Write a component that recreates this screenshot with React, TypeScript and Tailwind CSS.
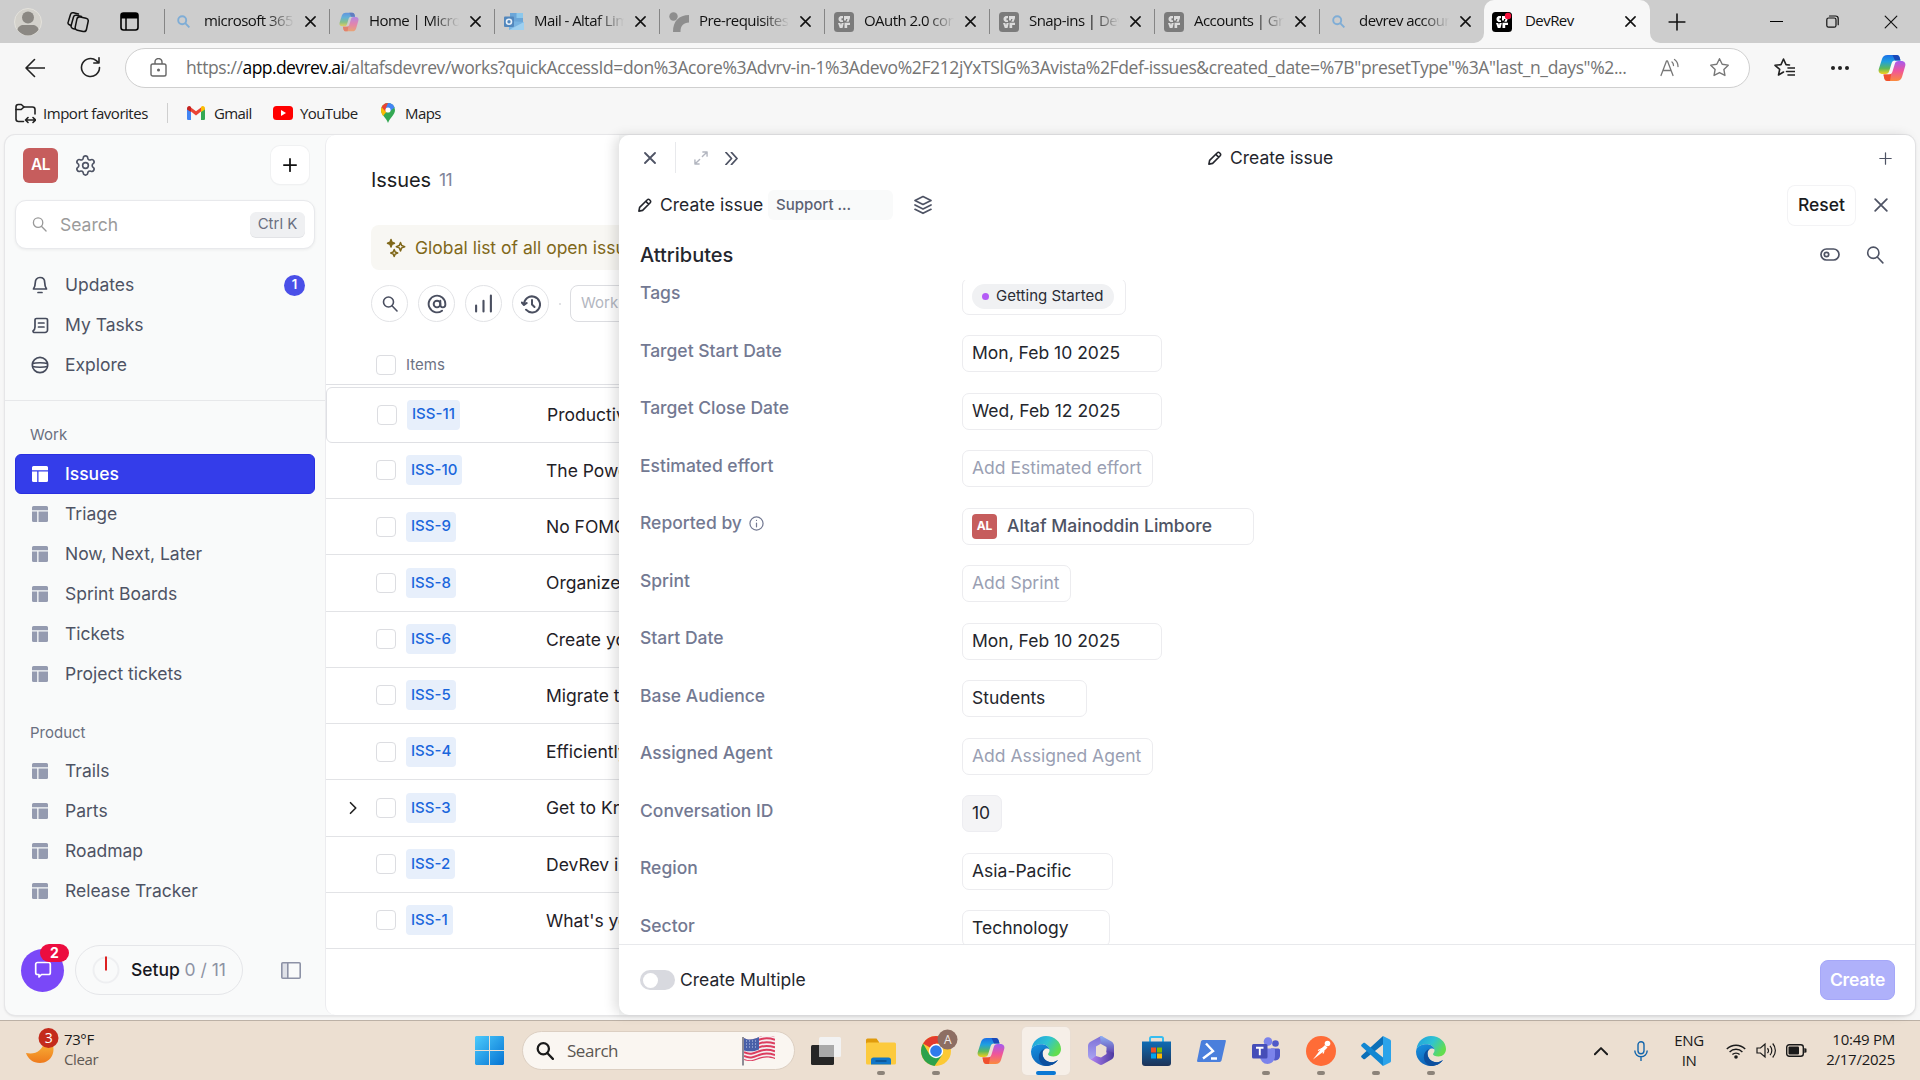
import React, { type ReactNode } from "react";
import { Settings } from "lucide-react";

/* ---------- icons ---------- */

type IconProps = { className?: string };

function Stroke({
  className = "size-5",
  box = 24,
  w = 2,
  children,
}: {
  className?: string;
  box?: number;
  w?: number;
  children: ReactNode;
}) {
  return (
    <svg
      className={className + " shrink-0"}
      viewBox={`0 0 ${box} ${box}`}
      fill="none"
      stroke="currentColor"
      strokeWidth={w}
      strokeLinecap="round"
      strokeLinejoin="round"
    >
      {children}
    </svg>
  );
}

const CloseIcon = ({ className = "size-[10px]", w = 1.7 }: IconProps & { w?: number }) => (
  <Stroke className={className} box={12} w={w}>
    <path d="M1 1l10 10M11 1L1 11" />
  </Stroke>
);

const PlusIcon = ({ className, w = 1.5 }: IconProps & { w?: number }) => (
  <Stroke className={className} box={16} w={w}>
    <path d="M8 1v14M1 8h14" />
  </Stroke>
);

const SearchIcon = ({ className, w = 1.5 }: IconProps & { w?: number }) => (
  <Stroke className={className} box={16} w={w}>
    <circle cx="6.5" cy="6" r="5" />
    <path d="M10 9.8L15 15" />
  </Stroke>
);

const PencilIcon = () => (
  <Stroke className="size-[15px]" box={16} w={1.7}>
    <path d="M2 14l.8-4L11 1.9a1.6 1.6 0 0 1 2.3 0l.8.8a1.6 1.6 0 0 1 0 2.3L6 13.2 2 14zM9.4 3.6l3 3" />
  </Stroke>
);

const BoardIcon = ({ className = "text-[#959bb0]" }: IconProps) => (
  <svg className={"size-4 shrink-0 " + className} viewBox="0 0 16 16" fill="currentColor">
    <path d="M1.500 0h13A1.500 1.500 0 0 1 16 1.500v2.800H0V1.500A1.500 1.500 0 0 1 1.500 0z" />
    <path d="M0 5.500h5.200V16H1.500A1.500 1.500 0 0 1 0 14.500z" />
    <path d="M6.500 5.500H16v9a1.500 1.500 0 0 1-1.500 1.500h-8z" />
  </svg>
);

const CopilotIcon = ({ className = "size-7", faded = false }: IconProps & { faded?: boolean }) => (
  <svg className={className + " shrink-0" + (faded ? " opacity-60" : "")} viewBox="0 0 28 28">
    <defs>
      <linearGradient id="cpA" x1="0" y1="0" x2="0" y2="1">
        <stop offset="0" stopColor="#1b6fe8" />
        <stop offset=".35" stopColor="#1fa0e0" />
        <stop offset=".7" stopColor="#5cb85c" />
        <stop offset="1" stopColor="#f5cf1b" />
      </linearGradient>
      <linearGradient id="cpB" x1="0" y1="0" x2="0" y2="1">
        <stop offset="0" stopColor="#a45bf0" />
        <stop offset=".5" stopColor="#f0559a" />
        <stop offset="1" stopColor="#fb8b3c" />
      </linearGradient>
    </defs>
    <path d="M12 1h6.500c2 0 2.800 1.300 3.300 3l.7 2.500H17c-2 0-2.900 1-3.500 3l-2.200 7.300C10.700 19 9.600 20 7.500 20H4.800C1.500 20 0 17.800.8 15L4 5C4.900 2.400 6.500 1 9.500 1z" fill="url(#cpA)" />
    <path d="M14.500 1h4c2 0 2.800 1.300 3.300 3l.7 2.500H17z" fill="#1a49b8" />
    <path d="M16 27H9.500c-2 0-2.800-1.300-3.300-3l-.7-3.500H11c2 0 2.900-1 3.500-3l2.200-7.300C17.300 8 18.400 7 20.500 7h2.700c3.300 0 4.800 2.200 4 5L24 23c-.9 2.600-2.500 4-5.500 4z" fill="url(#cpB)" />
    <path d="M9.500 27c-2 0-2.800-1.300-3.300-3l-.7-3.500H11c1 0 1.700-.2 2.200-.7L12 27z" fill="#f0502e" />
  </svg>
);

const DevRevIcon = ({ active = false }: { active?: boolean }) => (
  <svg className="size-5 shrink-0" viewBox="0 0 20 20">
    <rect width="20" height="20" rx="3.500" fill={active ? "#000" : "#7b7b7b"} />
    <g fill={active ? "#fff" : "#dcdcdc"}>
      <path d="M9 4H6.500a3.200 3.200 0 0 0 0 6H9V8.200H7.500V6.200H9z" />
      <path d="M10 4h6v2l-1.300 3.800h-2.400L13.600 7H12v1.500h-2z" />
      <path d="M4 11h2.300l.7 2 .6-2h2.200L8.500 16H5.800z" />
      <path d="M10.500 10.800H16V13h-2.800v3h-2.700z" />
    </g>
    {active && <circle cx="16" cy="4" r="3.200" fill="#f5113c" />}
  </svg>
);

const TabSearch = () => (
  <svg className="size-[13px] shrink-0" viewBox="0 0 13 13" fill="none" stroke="#7fadd6" strokeWidth="1.900">
    <circle cx="5.200" cy="5.200" r="4" />
    <path d="M8.200 8.200l4.200 4.200" />
  </svg>
);

const OutlookIcon = () => (
  <svg className="size-5 shrink-0" viewBox="0 0 20 20">
    <path d="M6 1h13v9H6z" fill="#6ba6d8" />
    <path d="M12.500 1H19v5h-6.500z" fill="#8cc8ec" />
    <path d="M5 9l15 1v8H5z" fill="#78b4e2" />
    <path d="M20 10l-15 8h15z" fill="#9fd0f0" />
    <rect y="4.500" width="10" height="10.500" rx="1" fill="#5287bd" />
    <circle cx="5" cy="9.800" r="2.500" fill="none" stroke="#e9f1f8" strokeWidth="1.600" />
  </svg>
);

const SproutIcon = () => (
  <svg className="size-5 shrink-0" viewBox="0 0 20 20" fill="#8e8e8e">
    <circle cx="4.500" cy="4.500" r="4.200" />
    <path d="M20 3v7.500c-5.500.3-8.500 3-8.500 9.500H4C4 9 10 3.300 20 3z" />
  </svg>
);

const EdgeIcon = () => (
  <svg className="size-[30px] shrink-0" viewBox="0 0 30 30">
    <defs>
      <linearGradient id="edG" x1="0" y1="0" x2="1" y2=".5">
        <stop offset="0" stopColor="#1f9be0" />
        <stop offset=".55" stopColor="#2fc3d2" />
        <stop offset="1" stopColor="#62dd4e" />
      </linearGradient>
      <linearGradient id="edB" x1="0" y1="0" x2=".6" y2="1">
        <stop offset="0" stopColor="#1793e2" />
        <stop offset="1" stopColor="#0d5cb0" />
      </linearGradient>
    </defs>
    <path d="M.5 13C1.500 5.500 7.500 0 15 0c8.500 0 15 6 15 13 0 4.500-3.300 7.500-7.500 7.500-3.500 0-5.500-1.200-5.500-2.300 0-1 1.500-1.600 1.500-3.700C18.500 11 15 8.300 10.500 8.300 5.500 8.300 2 10.500.5 13z" fill="url(#edG)" />
    <path d="M.5 13C2 10.500 5.500 8.300 10.500 8.300c4 0 7.200 2.100 7.900 5.200C17 11.800 11.500 12 11.500 17.500c0 5.500 5 9.300 9.800 8.700 2-.2 3.800-1 5.700-2.200C24.400 27.700 20 30 15 30 6.700 30 0 23.500 0 15.500z" fill="url(#edB)" />
    <path d="M11.500 17.500c0 5.500 5 9.300 9.800 8.700 2-.2 3.800-1 5.700-2.200C24.400 27.700 20 30 15 30 10.500 29 7 24.500 8 19.500c.4-3 3-6.500 6.500-6.700-2 .9-3 2.600-3 4.700z" fill="#0c4f9e" />
  </svg>
);

const FavFolder = () => (
  <svg className="size-[21px] shrink-0" viewBox="0 0 21 21" fill="none" stroke="#222" strokeWidth="1.600" strokeLinecap="round" strokeLinejoin="round">
    <path d="M8.500 18.500H3.500A2.500 2.500 0 0 1 1 16V3.800A2.300 2.300 0 0 1 3.300 1.500h3L9 4h8.500A2.500 2.500 0 0 1 20 6.500V11" />
    <path d="M1 6.500h5.200L9 4M11 17h9M13 14.500L10.500 17l2.500 2.500M18 14.500l2.500 2.500-2.500 2.500" />
  </svg>
);

const GmailIcon = () => (
  <svg className="h-[14px] w-[18px] shrink-0" viewBox="0 0 18 14">
    <path d="M0 2.500V12.700C0 13.400.6 14 1.300 14H4V5.500z" fill="#4285f4" />
    <path d="M18 2.500V12.700c0 .7-.6 1.300-1.300 1.300H14V5.500z" fill="#34a853" />
    <path d="M4 5.500v-4L9 5.200l5-3.700v4L9 9.500z" fill="#ea4335" />
    <path d="M0 2.500C0 .3 2.400-.7 4 .9v5.100L0 3.500z" fill="#c5221f" />
    <path d="M18 2.500C18 .3 15.600-.7 14 .9v5.100l4-2.500z" fill="#fbbc04" />
  </svg>
);

const MapsIcon = () => (
  <svg className="h-[20px] w-[14px] shrink-0" viewBox="0 0 14 20">
    <path d="M7 0a7 7 0 0 1 7 7c0 5-5 7.500-7 13C5 14.500 0 12 0 7a7 7 0 0 1 7-7z" fill="#34a853" />
    <path d="M0 7a7 7 0 0 1 2-5l5 5-5 6C.7 11 0 9 0 7z" fill="#fbbc04" />
    <path d="M1.700 2.400A7 7 0 0 1 7 0l.5 4L4.500 8.500.6 4.300z" fill="#ea4335" />
    <path d="M7 0c3 0 5.700 1.900 6.600 4.500L8 9 4.800 5z" fill="#4285f4" />
    <circle cx="7" cy="7" r="2.600" fill="#fff" />
  </svg>
);

/* ---------- browser chrome ---------- */

const TABS: { title: string; icon: ReactNode }[] = [
  { title: "microsoft 365", icon: <TabSearch /> },
  { title: "Home | Micro", icon: <CopilotIcon className="size-5" faded /> },
  { title: "Mail - Altaf Lim", icon: <OutlookIcon /> },
  { title: "Pre-requisites", icon: <SproutIcon /> },
  { title: "OAuth 2.0 con", icon: <DevRevIcon /> },
  { title: "Snap-ins | Dev", icon: <DevRevIcon /> },
  { title: "Accounts | Gro", icon: <DevRevIcon /> },
  { title: "devrev accoun", icon: <TabSearch /> },
];

function TabStrip() {
  return (
    <div className="flex h-[43px] items-center bg-[#cdcdcd] font-['Open_Sans','Noto_Sans',sans-serif] text-[15px] tracking-[-0.550px] text-[#111]">
      <svg className="ml-[14px] size-7 shrink-0" viewBox="0 0 28 28">
        <circle cx="14" cy="14" r="13.500" fill="#d3d1cb" stroke="#e4e2dc" />
        <circle cx="14" cy="9.500" r="6" fill="#8b8883" />
        <path d="M3.500 22c0-3 3-5 6-5h9c3 0 6 2 6 5-2.500 3.500-6.500 5.500-10.500 5.500S6 25.500 3.500 22z" fill="#8b8883" />
      </svg>
      <Stroke className="ml-[25px] size-[22px]" box={22} w={1.5}>
        <rect x="9" y="6.500" width="11.500" height="13.500" rx="2.800" transform="rotate(12 15 13)" />
        <path d="M7.500 18L5.800 17.500a2.500 2.500 0 0 1-1.600-3.200L6.500 6A2.500 2.500 0 0 1 9.500 4.300l5 1.200" />
        <path d="M3.800 14.500L2 13.500a2 2 0 0 1-.8-2.500l2.300-7.500A2.500 2.500 0 0 1 6.500 1.800l5 1.200" />
      </Stroke>
      <svg className="ml-[31px] size-[19px] shrink-0" viewBox="0 0 19 19" fill="none">
        <rect x="1" y="1" width="17" height="17" rx="2.500" stroke="#000" strokeWidth="1.600" />
        <path d="M1 3a2 2 0 0 1 2-2h13a2 2 0 0 1 2 2v3.500H1z" fill="#000" />
        <path d="M6 6v12" stroke="#000" strokeWidth="1.500" />
      </svg>
      <div className="ml-[25px] flex h-full">
        {TABS.map((t) => (
          <div key={t.title} className="flex w-[165px] items-center">
            <div className="h-[25px] w-px bg-[#858585]" />
            <div className="ml-[8px] flex w-[21px] justify-center">{t.icon}</div>
            <div className="ml-[10px] w-[92px] overflow-hidden whitespace-nowrap pb-[2px] [mask-image:linear-gradient(to_right,black_68%,transparent_98%)]">
              {t.title}
            </div>
            <CloseIcon className="ml-[9px] size-[11px]" />
          </div>
        ))}
        <div className="relative flex w-[166px] items-center rounded-t-[10px] bg-[#f7f7f7]">
          <svg className="absolute -left-[10px] bottom-0 size-[10px]" viewBox="0 0 10 10">
            <path d="M10 0v10H0a10 10 0 0 0 10-10z" fill="#f7f7f7" />
          </svg>
          <svg className="absolute -right-[10px] bottom-0 size-[10px]" viewBox="0 0 10 10">
            <path d="M0 0v10h10A10 10 0 0 1 0 0z" fill="#f7f7f7" />
          </svg>
          <div className="ml-[8px]">
            <DevRevIcon active />
          </div>
          <div className="ml-[13px] w-[100px] pb-[2px]">DevRev</div>
          <CloseIcon className="size-[11px]" />
        </div>
      </div>
      <PlusIcon className="ml-[18px] size-[18px]" w={1.4} />
      <div className="ml-[84px] h-[1.500px] w-[13px] bg-black" />
      <Stroke className="ml-[43px] size-[13px]" box={13} w={1.2}>
        <rect x="0.800" y="3" width="9.200" height="9.200" rx="1.800" />
        <path d="M3.500 1h6A2.700 2.700 0 0 1 12.200 3.700v6" />
      </Stroke>
      <CloseIcon className="ml-[45px] size-[14px]" w={1} />
    </div>
  );
}

function AddressBar() {
  return (
    <div className="flex h-[49px] items-center">
      <Stroke className="ml-[25px] size-[20px] text-[#222]" box={20} w={1.6}>
        <path d="M19.500 10H1M9.500 1.500L1 10l8.500 8.500" />
      </Stroke>
      <Stroke className="ml-[35px] size-[21px] text-[#222]" box={21} w={1.6}>
        <path d="M19.500 10.500a9 9 0 1 1-3.200-6.900l2.200 2M19 .8v5.200h-5.200" />
      </Stroke>
      <div className="ml-[24px] flex h-[40px] w-[1625px] items-center rounded-full border border-[#cfcfcf] bg-white">
        <svg className="ml-[24px] h-[19px] w-[17px] shrink-0" viewBox="0 0 17 19" fill="none" stroke="#666" strokeWidth="1.400">
          <rect x="1" y="6" width="15" height="12" rx="1.800" />
          <path d="M5 6V4a3.500 3.500 0 0 1 7 0v2" />
          <circle cx="8.500" cy="12" r=".8" fill="#444" />
        </svg>
        <div className="ml-[19px] w-[1455px] whitespace-nowrap font-['Open_Sans','Noto_Sans',sans-serif] text-[17.500px] tracking-[-0.388px] text-[#747474]">
          https://<span className="tracking-[-0.600px] text-black">app.devrev.ai</span>
          /altafsdevrev/works?quickAccessId=don%3Acore%3Advrv-in-1%3Adevo%2F212jYxTSlG%3Avista%2Fdef-issues&amp;created_date=%7B"presetType"%3A"last_n_days"%2...
        </div>
        <Stroke className="ml-[19px] size-[20px] text-[#777]" box={20} w={1.3}>
          <path d="M1 17.500L6.500 3h1L13 17.500M3 12.500h8M12 4c1 .8 1.500 2 1.500 3.500M14.500 1.500c2.300 1.500 3.500 4 3.500 7" />
        </Stroke>
        <Stroke className="ml-[29px] size-[21px] text-[#777]" box={24} w={1.6}>
          <path d="M12 2l3.100 6.300 6.900 1-5 4.900 1.200 6.900L12 17.800l-6.200 3.300L7 14.200l-5-4.900 6.900-1z" />
        </Stroke>
      </div>
      <Stroke className="ml-[24px] size-[21px] text-[#222]" box={21} w={1.6}>
        <path d="M9.500 15l-5 3 1.200-5.700L1 8.300l6-.7L9.500 2 12 7.600l3.500.4M14 11h6.500M12.500 14.500h8M14 18h6.500" />
      </Stroke>
      <div className="ml-[36px] flex gap-[3px]">
        <div className="size-[4px] rounded-full bg-[#222]" />
        <div className="size-[4px] rounded-full bg-[#222]" />
        <div className="size-[4px] rounded-full bg-[#222]" />
      </div>
      <CopilotIcon className="ml-[29px] size-[28px]" />
    </div>
  );
}

function Favorites() {
  return (
    <div className="flex h-[43px] items-center pb-[1px] font-['Open_Sans','Noto_Sans',sans-serif] text-[15px] tracking-[-0.470px] text-[#222]">
      <div className="ml-[15px]">
        <FavFolder />
      </div>
      <div className="ml-[7px] w-[124px] whitespace-nowrap">Import favorites</div>
      <div className="h-[20px] w-px bg-[#cfcfcf]" />
      <div className="ml-[19px]">
        <GmailIcon />
      </div>
      <div className="ml-[9px] w-[59px] tracking-[-0.600px]">Gmail</div>
      <svg className="h-[14px] w-[20px] shrink-0" viewBox="0 0 20 14">
        <rect width="20" height="14" rx="3.500" fill="#f00" />
        <path d="M8 4l5 3-5 3z" fill="#fff" />
      </svg>
      <div className="ml-[7px] w-[81px] tracking-[-0.600px]">YouTube</div>
      <MapsIcon />
      <div className="ml-[10px] tracking-[-0.600px]">Maps</div>
    </div>
  );
}

/* ---------- DevRev sidebar ---------- */

function NavRow({ icon, label, badge }: { icon: ReactNode; label: string; badge?: string }) {
  return (
    <div className="flex h-[40px] items-center pr-[20px]">
      <div className="ml-[26px] flex w-[18px] justify-center text-[#464b5c]">{icon}</div>
      <div className="ml-[16px] flex-1">{label}</div>
      {badge && (
        <div className="flex size-[21px] items-center justify-center rounded-full bg-[#4a4fe8] text-[13px] font-semibold text-white">
          {badge}
        </div>
      )}
    </div>
  );
}

function ViewRow({ label, active = false }: { label: string; active?: boolean }) {
  return (
    <div
      className={
        "mx-[10px] flex h-[40px] items-center rounded-[6px] " +
        (active ? "border border-[#2a2fe0] bg-[#343dea] font-medium text-white" : "border border-transparent")
      }
    >
      <div className="ml-[16px]">
        <BoardIcon className={active ? "text-white" : "text-[#959bb0]"} />
      </div>
      <div className="ml-[17px]">{label}</div>
    </div>
  );
}

function Sidebar() {
  return (
    <div className="flex w-[320px] shrink-0 flex-col text-[17.500px] text-[#4e5364]">
      <div className="mt-[11px] flex h-[38px] items-center">
        <div className="ml-[18px] flex size-[35px] items-center justify-center rounded-[6px] bg-[#c65d5d] text-[15.500px] font-semibold tracking-[-0.500px] text-white">
          AL
        </div>
        <Settings className="ml-[16px] size-[23px] text-[#4e5364]" strokeWidth={1.7} />
        <div className="ml-auto mr-[16px] flex size-[38px] items-center justify-center rounded-[9px] bg-white text-[#111] shadow-[0_0_0_1px_#f0f1f2,0_1px_2px_rgba(0,0,0,0.060)]">
          <PlusIcon className="size-[14px]" w={2} />
        </div>
      </div>
      <div className="ml-[10px] mt-[16px] flex h-[49px] w-[300px] items-center rounded-[11px] border border-[#e8e9ec] bg-white shadow-[0_1px_3px_rgba(0,0,0,0.060)]">
        <SearchIcon className="ml-[16px] size-[15px] text-[#999]" w={1.4} />
        <div className="ml-[13px] flex-1 pt-[1px] text-[#9b9b9b]">Search</div>
        <div className="mr-[9px] flex h-[25px] w-[55px] items-center justify-center rounded-[6px] bg-[#eff0f2] text-[15px] text-[#6a6f80] shadow-[0_1px_0_#e2e3e6]">
          Ctrl K
        </div>
      </div>
      <div className="mt-[16px] flex flex-col">
        <NavRow
          label="Updates"
          badge="1"
          icon={
            <Stroke className="size-[18px]" box={18} w={1.7}>
              <path d="M9 1.500c3 0 4.700 2.200 4.700 5 0 3.200.6 4.500 1.800 6.500h-13c1.200-2 1.800-3.300 1.800-6.500 0-2.800 1.700-5 4.700-5zM7 16.500h4" />
            </Stroke>
          }
        />
        <NavRow
          label="My Tasks"
          icon={
            <Stroke className="size-[17px]" box={17} w={1.7}>
              <path d="M4.500 1.500H14A1.500 1.500 0 0 1 15.500 3v10a2.500 2.500 0 0 1-2.500 2.500H2.500A1.500 1.500 0 0 1 1 14c1.500-1 2-1.500 2-4V3a1.500 1.500 0 0 1 1.500-1.500zM6.500 6H12M6.500 10H12" />
            </Stroke>
          }
        />
        <NavRow
          label="Explore"
          icon={
            <Stroke className="size-[18px]" box={18} w={1.7}>
              <circle cx="9" cy="9" r="7.700" />
              <path d="M1.700 7.500c3-1 11.600-1 14.600 0M1.700 10.500c3 1 11.600 1 14.600 0" />
            </Stroke>
          }
        />
      </div>
      <div className="mt-[15px] h-px bg-[#e7e8ea]" />
      <div className="flex h-[53px] flex-col justify-end pb-[9px] pl-[25px] text-[15px] leading-5 text-[#6a6f80]">Work</div>
      <ViewRow label="Issues" active />
      <ViewRow label="Triage" />
      <ViewRow label="Now, Next, Later" />
      <ViewRow label="Sprint Boards" />
      <ViewRow label="Tickets" />
      <ViewRow label="Project tickets" />
      <div className="flex h-[57px] flex-col justify-end pb-[8px] pl-[25px] text-[15px] leading-5 text-[#6a6f80]">Product</div>
      <ViewRow label="Trails" />
      <ViewRow label="Parts" />
      <ViewRow label="Roadmap" />
      <ViewRow label="Release Tracker" />
      <div className="mt-[34px] flex h-[50px] items-center">
        <div className="relative ml-[16px] flex size-[43px] items-center justify-center rounded-full bg-[#7a48f8] text-white">
          <Stroke className="size-[18px]" box={18} w={1.7}>
            <path d="M3.500 1.500h11A1.800 1.800 0 0 1 16.300 3.300v8.400a1.800 1.800 0 0 1-1.800 1.800H7.500L5 16v-2.500H3.500a1.800 1.800 0 0 1-1.800-1.800V3.300A1.800 1.800 0 0 1 3.500 1.500z" />
          </Stroke>
          <div className="absolute -top-[5px] left-[19px] flex h-[18px] w-[29px] items-center justify-center rounded-full bg-[#ec0d3f] text-[14px] font-bold">
            2
          </div>
        </div>
        <div className="ml-[11px] flex h-[50px] w-[168px] items-center rounded-full border border-[#e5e6e9]">
          <svg className="ml-[16px] size-[28px] shrink-0" viewBox="0 0 28 28" fill="none">
            <circle cx="14" cy="14" r="12.500" stroke="#eeeff1" strokeWidth="2" />
            <path d="M14 0.500V14.500" stroke="#dd2020" strokeWidth="2" />
          </svg>
          <div className="ml-[11px] whitespace-nowrap font-medium text-[#16171d]">
            Setup <span className="font-normal text-[#8d92a3]">0 / 11</span>
          </div>
        </div>
        <svg className="ml-[38px] h-[17px] w-[20px] shrink-0" viewBox="0 0 20 17" fill="none" stroke="#8d92a6" strokeWidth="1.600">
          <rect x="1" y="1" width="5.500" height="15" fill="#dfe1e8" stroke="none" />
          <rect x=".8" y=".8" width="18.400" height="15.400" rx="1" />
          <path d="M6.800 1v15" />
        </svg>
      </div>
    </div>
  );
}

/* ---------- issue list ---------- */

const ISSUES: { id: string; title: string; nested?: boolean }[] = [
  { id: "ISS-11", title: "Productivity" },
  { id: "ISS-10", title: "The Power" },
  { id: "ISS-9", title: "No FOMO" },
  { id: "ISS-8", title: "Organize" },
  { id: "ISS-6", title: "Create your" },
  { id: "ISS-5", title: "Migrate to" },
  { id: "ISS-4", title: "Efficiently" },
  { id: "ISS-3", title: "Get to Know", nested: true },
  { id: "ISS-2", title: "DevRev is" },
  { id: "ISS-1", title: "What's your" },
];

const Checkbox = () => <div className="size-[20px] shrink-0 rounded-[4px] border border-[#dcdde1] bg-white" />;

function RoundButton({ children }: { children: ReactNode }) {
  return (
    <div className="flex size-[37px] shrink-0 items-center justify-center rounded-full border border-[#e2e3e6] text-[#4a4f60]">
      {children}
    </div>
  );
}

function IssueList() {
  return (
    <div className="flex w-[294px] shrink-0 flex-col overflow-hidden rounded-l-[10px] border-l border-[#ececef] bg-white">
      <div className="flex h-[90px] shrink-0 items-center pl-[45px] text-[20px] text-[#1c1d22]">
        <span className="font-[440] tracking-[-0.100px]">Issues</span>
        <span className="ml-[8px] text-[17.500px] tracking-[-0.500px] text-[#80859a]">11</span>
      </div>
      <div className="ml-[45px] flex h-[45px] w-[600px] shrink-0 items-center rounded-[8px] bg-[#f8f7f3] text-[#80681a]">
        <Stroke className="ml-[15px] size-[20px]" box={20} w={1.5}>
          <path d="M5 1.500l1 2.800 2.500 1L6 6.300 5 9 4 6.300l-2.500-1 2.500-1z" fill="currentColor" />
          <path d="M14.500 4.500l1.200 3 3 1.200-3 1.200-1.200 3-1.200-3-3-1.200 3-1.200zM8.200 11.500l1 2.500 2.500 1-2.500 1-1 2.500-1-2.500-2.500-1 2.500-1z" />
        </Stroke>
        <div className="ml-[9px] whitespace-nowrap pt-[1px] text-[17.500px]">Global list of all open issues</div>
      </div>
      <div className="ml-[45px] mt-[15px] flex h-[37px] w-[600px] shrink-0 items-center gap-[10px]">
        <RoundButton>
          <SearchIcon className="size-[16px]" w={1.6} />
        </RoundButton>
        <RoundButton>
          <Stroke className="size-[20px]" w={2.3}>
            <circle cx="12" cy="12" r="4" />
            <path d="M16 8v5a3 3 0 0 0 6 0v-1a10 10 0 1 0-4 8" />
          </Stroke>
        </RoundButton>
        <RoundButton>
          <Stroke className="size-[19px]" box={18} w={2}>
            <path d="M2 11v5.500M9 6.500v10M16 1.500v15" />
          </Stroke>
        </RoundButton>
        <RoundButton>
          <Stroke className="size-[20px]" box={20} w={2}>
            <path d="M3 10.500A8 8 0 1 1 5 15.700M.8 8.500L3 11l2.700-2M11 6v4.500l2.500 2.500" />
          </Stroke>
        </RoundButton>
        <div className="size-[2px] rounded-full bg-[#d7d8dc]" />
        <div className="-ml-[1px] flex h-[37px] w-[140px] items-center rounded-[8px] border border-[#dcdde1] pl-[10px] text-[15px] text-[#b3b6c0]">
          Work
        </div>
      </div>
      <div className="flex h-[62.500px] shrink-0 items-start border-b border-[#dfe0e4] pl-[50px] pt-[33px]">
        <Checkbox />
        <div className="ml-[10px] text-[15px] leading-5 text-[#6d7284]">Items</div>
      </div>
      <div className="mt-[2px] flex flex-col">
        {ISSUES.map((r, i) => (
          <div
            key={r.id}
            className={
              "flex h-[56.250px] w-[600px] shrink-0 items-center " +
              (i === 0 ? "rounded-[6px] border border-[#dfe0e4]" : "border-b border-[#e2e3e6]")
            }
          >
            <div className="flex w-[50px] justify-center pl-[5px] text-[#222]">
              {r.nested && (
                <Stroke className="h-[14px] w-[9px]" box={12} w={2.2}>
                  <path d="M2 -1l7 7-7 7" />
                </Stroke>
              )}
            </div>
            <Checkbox />
            <div className="ml-[10px] flex w-[140px]">
              <div className="flex h-[30px] items-center rounded-[4px] bg-[#e7effb] px-[5px] text-[15px] font-[450] text-[#1a66dc]">
                {r.id}
              </div>
            </div>
            <div className="whitespace-nowrap pt-[1px] text-[17.500px] text-[#1f2127]">{r.title}</div>
          </div>
        ))}
      </div>
    </div>
  );
}

/* ---------- create issue panel ---------- */

type Field = { label: string; value?: string; hint?: string; box: string; kind?: "tag" | "user" | "plain"; info?: boolean };

const FIELDS: Field[] = [
  { label: "Tags", value: "Getting Started", box: "w-[164px]", kind: "tag" },
  { label: "Target Start Date", value: "Mon, Feb 10 2025", box: "w-[200px]" },
  { label: "Target Close Date", value: "Wed, Feb 12 2025", box: "w-[200px]" },
  { label: "Estimated effort", hint: "Add Estimated effort", box: "w-[191px]" },
  { label: "Reported by", value: "Altaf Mainoddin Limbore", box: "w-[292px]", kind: "user", info: true },
  { label: "Sprint", hint: "Add Sprint", box: "w-[109px]" },
  { label: "Start Date", value: "Mon, Feb 10 2025", box: "w-[200px]" },
  { label: "Base Audience", value: "Students", box: "w-[125px]" },
  { label: "Assigned Agent", hint: "Add Assigned Agent", box: "w-[191px]" },
  { label: "Conversation ID", value: "10", box: "w-[40px]", kind: "plain" },
  { label: "Region", value: "Asia-Pacific", box: "w-[151px]" },
  { label: "Sector", value: "Technology", box: "w-[148px]" },
];

function FieldValue({ f }: { f: Field }) {
  if (f.kind === "tag")
    return (
      <div className="flex h-[25px] w-[142px] items-center whitespace-nowrap rounded-full bg-[#f0f1f3] pl-[10px] text-[15px] tracking-[0.040px] text-[#2a2c35]">
        <span className="mr-[7px] size-[7px] rounded-full bg-[#b45cf6]" />
        {f.value}
      </div>
    );
  if (f.kind === "user")
    return (
      <div className="flex items-center whitespace-nowrap font-medium text-[#4e5364]">
        <div className="mr-[10px] flex size-[25px] items-center justify-center rounded-[4px] bg-[#c65d5d] text-[12px] font-bold text-white">
          AL
        </div>
        {f.value}
      </div>
    );
  return <div className={"whitespace-nowrap " + (f.hint ? "text-[#9a9fb3]" : "text-[#24262d]")}>{f.value ?? f.hint}</div>;
}

function CreatePanel() {
  return (
    <div className="relative flex flex-1 flex-col rounded-[10px] bg-white text-[17.500px] shadow-[-5px_0_12px_rgba(0,0,0,0.120)]">
      <div className="flex h-[46px] shrink-0 items-center text-[#4e5364]">
        <CloseIcon className="ml-[25px] size-[12px]" w={1.8} />
        <div className="ml-[19px] -mt-[2px] h-[31px] w-px bg-[#e8e9ec]" />
        <Stroke className="ml-[18px] size-[14px] text-[#b3b6c0]" box={15} w={1.5}>
          <path d="M9 6l5-5M9.500 1H14v4.500M6 9l-5 5M5.500 14H1V9.500" />
        </Stroke>
        <Stroke className="ml-[17px] size-[13px]" box={13} w={1.8}>
          <path d="M1 .5l5.500 6L1 12.500M6.500 .5l5.500 6-5.500 6" />
        </Stroke>
        <div className="ml-[469px] flex items-center gap-[8px] text-[#24262d]">
          <PencilIcon />
          <span className="font-[440]">Create issue</span>
        </div>
        <PlusIcon className="ml-auto mr-[23px] size-[13px]" w={1.5} />
      </div>
      <div className="flex h-[48px] shrink-0 items-center text-[#24262d]">
        <div className="ml-[18px] flex items-center gap-[8px]">
          <PencilIcon />
          <span className="w-[108px] whitespace-nowrap pt-[1px]">Create issue</span>
        </div>
        <div className="flex h-[30px] w-[125px] items-center rounded-[6px] bg-[#f9fafa] pl-[8px] text-[15px] font-[450] text-[#5c6172]">
          Support ...
        </div>
        <Stroke className="ml-[20px] size-[20px] text-[#4e5364]" box={20} w={1.7}>
          <path d="M10 1.500l8 4-8 4-8-4zM2 10l8 4 8-4M2 14.300l8 4 8-4" />
        </Stroke>
        <div className="ml-auto flex h-[39px] w-[67px] items-center justify-center rounded-[7px] font-medium text-[#1a1b20] shadow-[0_0_0_1px_#f3f3f5]">
          Reset
        </div>
        <CloseIcon className="ml-[19px] mr-[27px] size-[14px] text-[#4e5364]" w={1.5} />
      </div>
      <div className="flex h-[51px] shrink-0 items-center pl-[21px] text-[#4e5364]">
        <div className="flex-1 text-[20px] font-medium text-[#24262d]">Attributes</div>
        <svg className="h-[13px] w-[20px]" viewBox="0 0 20 13" fill="none" stroke="currentColor" strokeWidth="1.700">
          <rect x="1" y="1" width="18" height="11" rx="5.500" />
          <circle cx="6.500" cy="6.500" r="2.200" />
        </svg>
        <SearchIcon className="ml-[26px] mr-[31px] size-[18px]" w={1.4} />
      </div>
      <div className="h-[664px] shrink-0 overflow-hidden pl-[21px]">
        <div className="-mt-[2.500px] flex flex-col">
          {FIELDS.map((f) => (
            <div key={f.label} className="flex h-[57.500px] shrink-0 items-start">
              <div className="flex h-[32px] w-[322px] items-center gap-[7px] font-medium text-[#737992]">
                {f.label}
                {f.info && (
                  <Stroke className="size-[15px]" box={16} w={1.3}>
                    <circle cx="8" cy="8" r="7" />
                    <path d="M8 7.500v4M8 4.700v.1" />
                  </Stroke>
                )}
              </div>
              <div
                className={
                  "flex h-[37px] items-center rounded-[7px] border pl-[9px] " +
                  (f.kind === "plain" ? "border-[#ededf1] bg-[#f4f4f6] " : "border-[#ececef] bg-white ") +
                  f.box
                }
              >
                <FieldValue f={f} />
              </div>
            </div>
          ))}
        </div>
      </div>
      <div className="flex flex-1 items-center border-t border-[#e8e9ec] text-[#24262d]">
        <div className="ml-[21px] flex h-[20px] w-[35px] items-center rounded-full bg-[#d8d9df] pl-[3px]">
          <div className="size-[15px] rounded-full bg-white" />
        </div>
        <div className="ml-[5px] pt-[1px]">Create Multiple</div>
        <div className="ml-auto mr-[20px] flex h-[40px] w-[75px] items-center justify-center rounded-[8px] border border-[#a5a7f8] bg-[#afb1fa] font-semibold tracking-[-0.200px] text-white">
          Create
        </div>
      </div>
    </div>
  );
}

/* ---------- taskbar ---------- */

function TaskCell({ children, state }: { children: ReactNode; state?: "running" | "active" }) {
  return (
    <div
      className={
        "relative flex size-[48px] shrink-0 items-center justify-center rounded-[5px] " +
        (state === "active" ? "bg-[#f6efe8] shadow-[0_0_0_1px_#e9ded3]" : "")
      }
    >
      {children}
      {state === "running" && <div className="absolute bottom-0 h-[4px] w-[8px] rounded-full bg-[#8c8379]" />}
      {state === "active" && <div className="absolute bottom-0 h-[4px] w-[20px] rounded-full bg-[#0a78d4]" />}
    </div>
  );
}

const stripes = [0, 1, 2, 3, 4, 5, 6];

function Taskbar() {
  return (
    <div className="flex h-[60px] shrink-0 items-center border-t border-[#bcb1a6] bg-[#ecdfd1] font-['Open_Sans','Noto_Sans',sans-serif] text-[15px] tracking-[-0.400px] text-[#1a1a1a]">
      <div className="flex w-[465px] shrink-0 items-center pl-[26px]">
        <svg className="-mt-[6px] h-[40px] w-[34px] shrink-0 overflow-visible" viewBox="0 0 34 40">
          <defs>
            <linearGradient id="moon" x1="0" y1="0" x2="0" y2="1">
              <stop offset="0" stopColor="#f9b63a" />
              <stop offset="1" stopColor="#ee7a1c" />
            </linearGradient>
          </defs>
          <path d="M25 13c6 9 1 22-11 22C7 35 2 31 0 25c9 2 17-2 18-12z" fill="url(#moon)" />
          <circle cx="22.500" cy="10" r="10" fill="#c42b1c" />
          <text x="22.500" y="15" textAnchor="middle" fontSize="14" fill="#fff">3</text>
        </svg>
        <div className="ml-[4px] flex flex-col pb-[3px] leading-[20px]">
          <span>73°F</span>
          <span className="text-[#5f5953]">Clear</span>
        </div>
      </div>
      <TaskCell>
        <svg className="size-[29px]" viewBox="0 0 29 29">
          <defs>
            <linearGradient id="win" x1="0" y1="0" x2="1" y2="1">
              <stop offset="0" stopColor="#4ccbfc" />
              <stop offset="1" stopColor="#0573d3" />
            </linearGradient>
          </defs>
          <path d="M1 0h13v14H0V1zM15 0h13l1 1v13H15zM0 15h14v14H1l-1-1zM15 15h14v13l-1 1H15z" fill="url(#win)" />
        </svg>
      </TaskCell>
      <div className="ml-[9px] mr-[7px] flex h-[39px] w-[273px] shrink-0 items-center rounded-full border border-[#dccfc2] bg-[#faf6f1]">
        <SearchIcon className="ml-[13px] size-[18px]" w={2} />
        <div className="ml-[13px] flex-1 text-[17px] tracking-[-0.470px] text-[#5b5651]">Search</div>
        <svg className="mr-[18px] h-[30px] w-[34px] shrink-0" viewBox="0 0 34 30">
          <defs>
            <clipPath id="flag">
              <path d="M2 2c6 3 10 1 15-1s10-2 16 0v22c-6-2-11-2-16 0s-9 3-15 1z" />
            </clipPath>
          </defs>
          <g clipPath="url(#flag)">
            <rect width="34" height="30" fill="#f4eef0" />
            {stripes.map((s) => (
              <path key={s} d={`M2 ${1 + s * 3.8}c6 3 10 1 15-1s10-2 16 0`} stroke="#dc3d5e" strokeWidth="2" fill="none" />
            ))}
            <path d="M2 0h15v13.500c-5 2-9 2.500-15 1z" fill="#4860a8" />
            <path d="M4 5h12M4 8h12M4 11h12" stroke="#c7d0ea" strokeWidth="1" strokeDasharray="1 2" />
          </g>
          <path d="M1 1v28.500" stroke="#8f8d96" strokeWidth="2" />
        </svg>
      </div>
      <div className="flex gap-[7px]">
        <TaskCell>
          <svg className="size-[30px]" viewBox="0 0 30 30">
            <rect y="9" width="23" height="20" rx="1.500" fill="#262626" />
            <rect x="8" y="1" width="22" height="20" rx="1.500" fill="#f2f2f2" />
            <path d="M8 9h15v12H9.500A1.500 1.500 0 0 1 8 19.500z" fill="#a9a9a9" />
          </svg>
        </TaskCell>
        <TaskCell state="running">
          <svg className="size-[30px]" viewBox="0 0 30 30">
            <path d="M0 4a1.500 1.500 0 0 1 1.500-1.500h9L13 6v5H0z" fill="#e09b0c" />
            <rect y="6.500" width="30" height="22" rx="1.500" fill="#fcca3e" />
            <path d="M5 28.500V24a2.500 2.500 0 0 1 2.500-2.500h15A2.500 2.500 0 0 1 25 24v4.500z" fill="#1176c8" />
            <path d="M9.500 25h11" stroke="#0b4f8c" strokeWidth="1.500" />
          </svg>
        </TaskCell>
        <TaskCell state="running">
          <svg className="size-[30px] overflow-visible" viewBox="0 0 30 30">
            <circle cx="15" cy="15" r="15" fill="#fcc934" />
            <path d="M15 15L2 7.500A15 15 0 0 1 28 7.500H15z" fill="#e33b2e" />
            <path d="M2 7.500a15 15 0 0 0 11.500 22.400L21.500 18.500 15 22l-6.500-3.500z" fill="#2ca24c" />
            <circle cx="15" cy="15" r="7.200" fill="#fff" />
            <circle cx="15" cy="15" r="5.800" fill="#2f7bea" />
            <circle cx="26.500" cy="3.500" r="10" fill="#8d6e63" />
            <text x="26.500" y="8" textAnchor="middle" fontSize="12" fill="#f3ece8">A</text>
          </svg>
        </TaskCell>
        <TaskCell>
          <CopilotIcon className="size-[28px]" />
        </TaskCell>
        <TaskCell state="active">
          <EdgeIcon />
        </TaskCell>
        <TaskCell>
          <svg className="h-[29px] w-[26px]" viewBox="0 0 26 29">
            <defs>
              <linearGradient id="m3a" x1="0" y1="0" x2="0" y2="1">
                <stop offset="0" stopColor="#7d6fd6" />
                <stop offset="1" stopColor="#a9a4f2" />
              </linearGradient>
              <linearGradient id="m3b" x1="0" y1="0" x2="0" y2="1">
                <stop offset="0" stopColor="#8fb0f4" />
                <stop offset="1" stopColor="#5a3aa8" />
              </linearGradient>
              <linearGradient id="m3c" x1="0" y1="0" x2="1" y2="0">
                <stop offset="0" stopColor="#b184f2" />
                <stop offset="1" stopColor="#4c3aa0" />
              </linearGradient>
            </defs>
            <path d="M13 0L2.500 5.700C1 6.500 0 8 0 10v9c0 2 1 3.500 2.500 4.500L8 20.500v-10l7-4V1z" fill="url(#m3a)" />
            <path d="M12 .4c.8-.5 1.500-.5 2.500 0l9 5.100C25 6.500 26 8 26 10v9l-7.500-3v-5L13 8z" fill="url(#m3b)" />
            <path d="M2.500 23.500L8 20l5 1.500 5.500-3.500v-3.500L26 17v2c0 2-1 3.500-2.500 4.500L15 28.300c-1.500.9-2.500.9-4 0z" fill="url(#m3c)" />
          </svg>
        </TaskCell>
        <TaskCell>
          <svg className="h-[30px] w-[29px]" viewBox="0 0 29 30">
            <defs>
              <linearGradient id="store" x1="0" y1="0" x2="0" y2="1">
                <stop offset="0" stopColor="#0f6cb4" />
                <stop offset="1" stopColor="#1d3358" />
              </linearGradient>
            </defs>
            <path d="M8 6V2.500A1.500 1.500 0 0 1 9.500 1h10A1.500 1.500 0 0 1 21 2.500V6" fill="none" stroke="#37bdf0" strokeWidth="2" />
            <path d="M0 5.500h29V27a3 3 0 0 1-3 3H3a3 3 0 0 1-3-3z" fill="url(#store)" />
            <path d="M9 11.500h5v5H9z" fill="#f25022" />
            <path d="M15 11.500h5v5h-5z" fill="#7fba00" />
            <path d="M9 17.500h5v5H9z" fill="#00a4ef" />
            <path d="M15 17.500h5v5h-5z" fill="#ffb900" />
          </svg>
        </TaskCell>
        <TaskCell>
          <svg className="h-[22px] w-[29px]" viewBox="0 0 29 22">
            <path d="M6 0h21.500a1.200 1.200 0 0 1 1.300 1.500L24.500 20.500A2 2 0 0 1 22.500 22H1.300A1.200 1.200 0 0 1 .1 20.500L4 1.500A2 2 0 0 1 6 0z" fill="#4a7fdc" />
            <path d="M9 3.500l7 7.500L6 18.500M14 18.500h6" stroke="#fff" strokeWidth="2.400" fill="none" />
          </svg>
        </TaskCell>
        <TaskCell state="running">
          <svg className="h-[27px] w-[28px]" viewBox="0 0 28 27">
            <circle cx="23.500" cy="6.500" r="3.300" fill="#5059c9" />
            <circle cx="16" cy="4.500" r="4.300" fill="#7b83eb" />
            <path d="M19 11.500h7.500A1.500 1.500 0 0 1 28 13v6a5 5 0 0 1-9 2.500z" fill="#5059c9" />
            <path d="M9 11.500h12.500A1.500 1.500 0 0 1 23 13v6.500a7.500 7.500 0 0 1-15 0z" fill="#7b83eb" />
            <rect y="7" width="15.500" height="14.500" rx="1.500" fill="#464eb8" />
            <path d="M4 10.800h7.500M7.800 10.800v7.500" stroke="#fff" strokeWidth="1.900" />
          </svg>
        </TaskCell>
        <TaskCell state="running">
          <svg className="size-[30px]" viewBox="0 0 30 30">
            <circle cx="15" cy="15" r="15" fill="#ff6c37" />
            <path d="M7 23.500L15 13l4-4 2.500 2.500-4 4z" fill="#fff" />
            <circle cx="21.500" cy="7.500" r="2.800" fill="#fff" />
            <path d="M17 12l-5 2.500M18 15l-1 2.500" stroke="#fff" strokeWidth="1.200" />
          </svg>
        </TaskCell>
        <TaskCell state="running">
          <svg className="size-[30px]" viewBox="0 0 30 30">
            <path d="M22 0l7 3.500c.6.300 1 .9 1 1.600v19.800c0 .7-.4 1.300-1 1.600L22 30z" fill="#2ba3ea" />
            <path d="M22 0v8.500L4 23c-.5.400-1.200.4-1.700 0L.6 21.400c-.6-.5-.6-1.400 0-1.900z" fill="#0b6fb8" />
            <path d="M22 30v-8.500L4 7c-.5-.4-1.200-.4-1.700 0L.6 8.600c-.6.500-.6 1.400 0 1.900z" fill="#1287d2" />
          </svg>
        </TaskCell>
        <TaskCell state="running">
          <EdgeIcon />
        </TaskCell>
      </div>
      <div className="ml-auto flex shrink-0 items-center pr-[25px]">
        <Stroke className="size-[14px]" box={13} w={1.8}>
          <path d="M.800 9.500l5.700-5.700 5.700 5.700" />
        </Stroke>
        <svg className="ml-[26px] h-[20px] w-[14px]" viewBox="0 0 14 20" fill="none" stroke="#1466ac" strokeWidth="1.400">
          <rect x="4" y=".8" width="6" height="12" rx="3" />
          <path d="M.8 9.500a6.200 6.200 0 0 0 12.400 0M7 15.700V20" />
        </svg>
        <div className="ml-[26px] w-[30px] pb-[2px] text-center leading-[20px]">
          ENG
          <br />
          IN
        </div>
        <svg className="ml-[22px] h-[16px] w-[20px]" viewBox="0 0 20 16" fill="none" stroke="#1a1a1a" strokeWidth="1.400">
          <path d="M.8 6a13 13 0 0 1 18.400 0M3.600 8.900a9 9 0 0 1 12.800 0M6.400 11.600a5.100 5.100 0 0 1 7.200 0" />
          <circle cx="10" cy="14" r="1.800" fill="#1a1a1a" stroke="none" />
        </svg>
        <svg className="ml-[10px] h-[17px] w-[21px]" viewBox="0 0 21 17" fill="none" stroke="#1a1a1a" strokeWidth="1.200">
          <path d="M1 6h3.500L9 2v13l-4.500-4H1zM11.500 6a4 4 0 0 1 0 5M14 3.800a7 7 0 0 1 0 9.400M16.700 1.500a10.500 10.500 0 0 1 0 14" />
        </svg>
        <svg className="ml-[9px] h-[13px] w-[21px]" viewBox="0 0 21 13">
          <rect x=".7" y=".7" width="16.600" height="11.600" rx="2.500" fill="none" stroke="#1a1a1a" strokeWidth="1.400" />
          <rect x="2.500" y="2.500" width="10.500" height="8" rx="1" fill="#1a1a1a" />
          <path d="M18.300 4l2.200.7v3.600l-2.200.7z" fill="#1a1a1a" />
        </svg>
        <div className="ml-[18px] w-[70px] pb-[3px] text-right leading-[20px] tracking-[-0.250px]">
          10:49 PM
          <br />
          2/17/2025
        </div>
      </div>
    </div>
  );
}

export default function App() {
  return (
    <div className="flex h-[1080px] w-[1920px] flex-col overflow-hidden bg-[#f7f7f7] font-['Inter',sans-serif]">
      <TabStrip />
      <AddressBar />
      <Favorites />
      <div className="mx-[5px] mb-[5px] flex h-[880px] w-[1910px] shrink-0 rounded-[10px] bg-[#f9fafa] shadow-[0_0_0_1px_#e6e6e8,0_1px_3px_rgba(0,0,0,0.150)]">
        <Sidebar />
        <IssueList />
        <CreatePanel />
      </div>
      <Taskbar />
    </div>
  );
}
